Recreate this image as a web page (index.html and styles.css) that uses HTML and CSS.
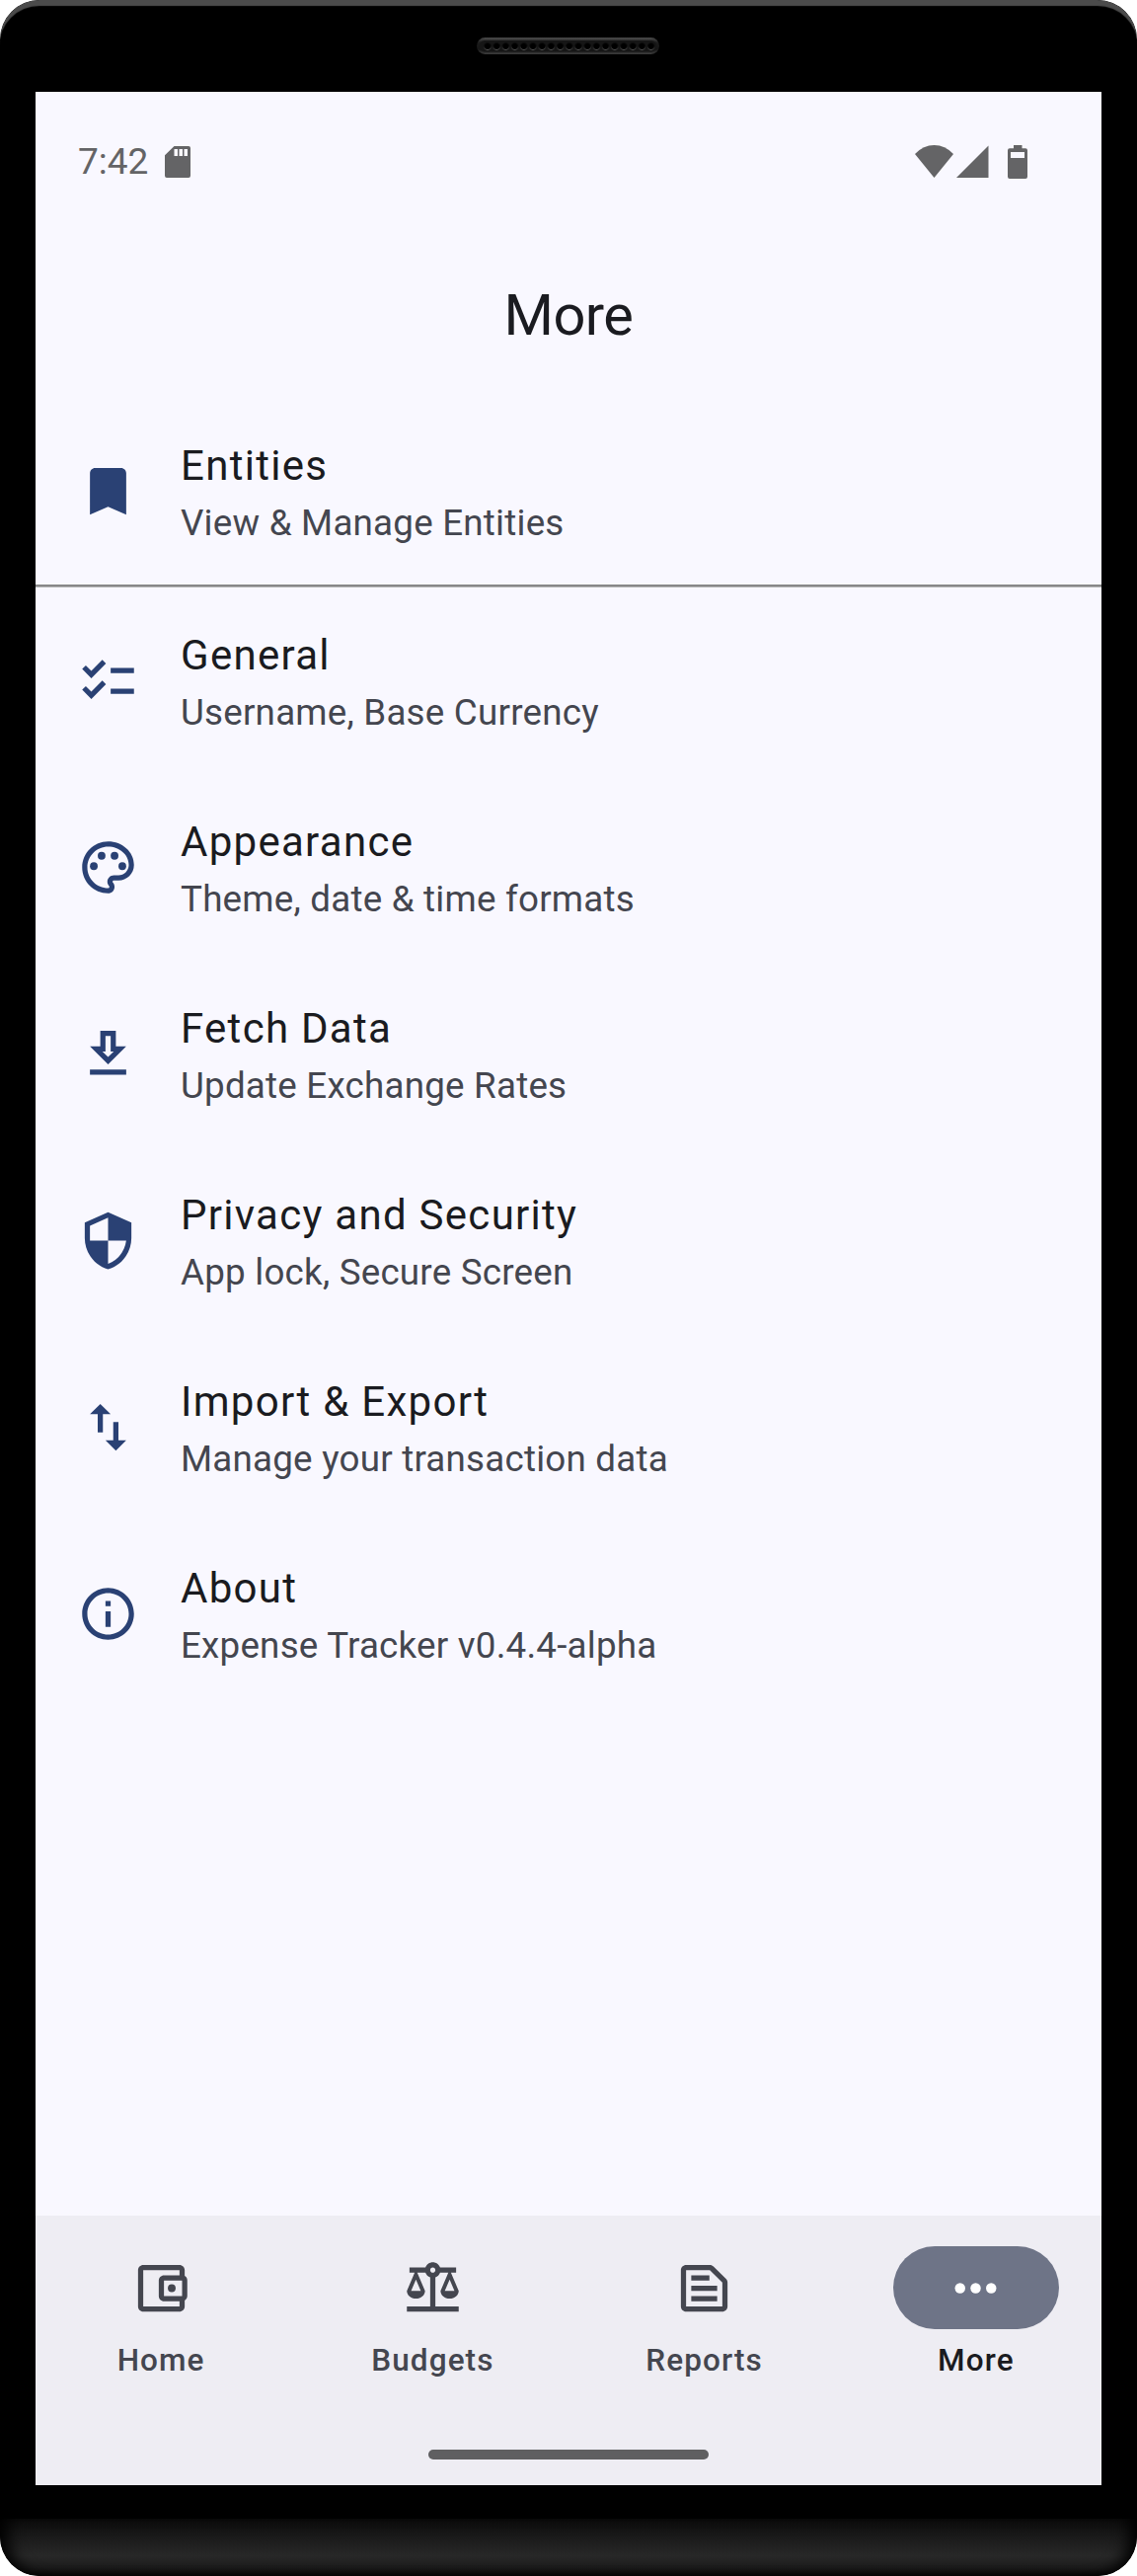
FILE: index.html
```html
<!DOCTYPE html>
<html lang="en">
<head>
<meta charset="utf-8">
<title>More</title>
<link rel="stylesheet" href="styles.css">
</head>
<body>
<div class="phone">
  <div class="bezel-top">
    <svg class="speaker" width="185" height="17" viewBox="0 0 185 17">
      <defs>
        <linearGradient id="rim" x1="0" y1="0" x2="0" y2="1">
          <stop offset="0" stop-color="#4c4c4c"/><stop offset=".3" stop-color="#1c1c1c"/><stop offset=".7" stop-color="#161616"/><stop offset="1" stop-color="#3c3c3c"/>
        </linearGradient>
        <linearGradient id="hole" x1="0" y1="0" x2="0" y2="1">
          <stop offset=".5" stop-color="#0c0c0c"/><stop offset="1" stop-color="#5a5a5a"/>
        </linearGradient>
        <pattern id="holes" x="6.4" y="0" width="9.2" height="17" patternUnits="userSpaceOnUse">
          <circle cx="4.6" cy="9" r="3.4" fill="#000" stroke="url(#hole)" stroke-width="1"/>
        </pattern>
      </defs>
      <rect width="185" height="17" rx="8.5" fill="url(#rim)"/>
      <rect x="2.5" y="3" width="180" height="11.5" rx="5.7" fill="#161616"/>
      <rect x="6.4" width="174.8" height="17" fill="url(#holes)"/>
    </svg>
  </div>
  <div class="screen">
    <header class="status">
      <span class="time">7:42</span>
      <svg class="sd" width="26" height="32" viewBox="0 0 26 32"><path fill-rule="evenodd" d="M9.500 0H24a2 2 0 0 1 2 2V30a2 2 0 0 1-2 2H2a2 2 0 0 1-2-2V9.300ZM9.500 3V10H13V3ZM14.500 3V10H18V3ZM19.500 3V10H23V3Z"/></svg>
      <span class="spacer"></span>
      <svg class="wifi" width="39" height="33" viewBox="0 0 39 33"><path d="M0 9Q8.500 0 19.500 0T39 9L19.500 33Z"/></svg>
      <svg class="signal" width="33" height="33" viewBox="0 0 33 33"><path d="M0 33L32.500 .5V33Z"/></svg>
      <svg class="battery" width="20" height="34" viewBox="0 0 20 34"><path fill-rule="evenodd" d="M6 0H14.500V3.200H18a2 2 0 0 1 2 2V32a2 2 0 0 1-2 2H2a2 2 0 0 1-2-2V5.200a2 2 0 0 1 2-2H6ZM3 7V13H17V7Z"/></svg>
    </header>
    <h1 class="title">More</h1>
    <main class="list">
      <div class="row">
        <svg class="icon" viewBox="0 0 24 24"><path d="M17 3H7c-1.100 0-1.990.9-1.990 2L5 21l7-3 7 3V5c0-1.100-.9-2-2-2z"/></svg>
        <div class="text"><div class="head">Entities</div><div class="sub">View &amp; Manage Entities</div></div>
      </div>
      <hr class="divider">
      <div class="row">
        <svg class="icon" viewBox="0 0 24 24"><path d="M22 7h-9v2h9V7zm0 8h-9v2h9v-2zM5.540 11 2 7.460l1.410-1.410 2.120 2.120 4.240-4.240 1.410 1.410L5.540 11zm0 8L2 15.460l1.410-1.410 2.120 2.120 4.240-4.240 1.410 1.410L5.540 19z"/></svg>
        <div class="text"><div class="head">General</div><div class="sub">Username, Base Currency</div></div>
      </div>
      <div class="row">
        <svg class="icon" viewBox="0 0 24 24"><path d="M12 22C6.490 22 2 17.510 2 12S6.490 2 12 2s10 4.040 10 9c0 3.310-2.690 6-6 6h-1.770c-.28 0-.5.22-.5.5 0 .12.05.23.13.33.41.47.64 1.060.64 1.670 0 1.380-1.120 2.500-2.500 2.500zm0-18c-4.410 0-8 3.590-8 8s3.590 8 8 8c.28 0 .5-.22.5-.5 0-.16-.08-.28-.14-.35-.41-.46-.63-1.050-.63-1.650 0-1.380 1.120-2.500 2.500-2.500H16c2.210 0 4-1.790 4-4 0-3.860-3.590-7-8-7z"/><circle cx="6.5" cy="11.5" r="1.5"/><circle cx="9.5" cy="7.5" r="1.5"/><circle cx="14.5" cy="7.5" r="1.5"/><circle cx="17.5" cy="11.5" r="1.5"/></svg>
        <div class="text"><div class="head">Appearance</div><div class="sub">Theme, date &amp; time formats</div></div>
      </div>
      <div class="row">
        <svg class="icon" viewBox="0 0 24 24"><path d="M19 9h-4V3H9v6H5l7 7 7-7zm-8 2V5h2v6h1.170L12 13.170 9.830 11H11zm-6 7h14v2H5z"/></svg>
        <div class="text"><div class="head">Fetch Data</div><div class="sub">Update Exchange Rates</div></div>
      </div>
      <div class="row">
        <svg class="icon" viewBox="0 0 24 24"><path d="M12 1 3 5v6c0 5.550 3.840 10.740 9 12 5.160-1.260 9-6.450 9-12V5l-9-4zm0 10.990h7c-.53 4.120-3.280 7.790-7 8.940V12H5V6.300l7-3.110v8.800z"/></svg>
        <div class="text"><div class="head">Privacy and Security</div><div class="sub">App lock, Secure Screen</div></div>
      </div>
      <div class="row">
        <svg class="icon" viewBox="0 0 24 24"><path d="M9 3 5 6.990h3V14h2V6.990h3L9 3zm7 14.010V10h-2v7.010h-3L15 21l4-3.990h-3z"/></svg>
        <div class="text"><div class="head">Import &amp; Export</div><div class="sub">Manage your transaction data</div></div>
      </div>
      <div class="row">
        <svg class="icon" viewBox="0 0 24 24"><path d="M11 7h2v2h-2zm0 4h2v6h-2zm1-9C6.480 2 2 6.480 2 12s4.480 10 10 10 10-4.480 10-10S17.520 2 12 2zm0 18c-4.410 0-8-3.590-8-8s3.590-8 8-8 8 3.590 8 8-3.590 8-8 8z"/></svg>
        <div class="text"><div class="head">About</div><div class="sub">Expense Tracker v0.4.4-alpha</div></div>
      </div>
    </main>
    <footer class="bottom">
      <nav class="nav">
        <div class="item">
          <span class="pill"><svg class="icon" viewBox="0 0 24 24"><path d="M21 7.280V5c0-1.100-.9-2-2-2H5c-1.110 0-2 .9-2 2v14c0 1.100.89 2 2 2h14c1.100 0 2-.9 2-2v-2.280c.59-.35 1-.98 1-1.720V9c0-.74-.41-1.380-1-1.720zM20 9v6h-7V9h7zM5 19V5h14v2h-6c-1.100 0-2 .9-2 2v6c0 1.100.9 2 2 2h6v2H5z"/><circle cx="16" cy="12" r="1.5"/></svg></span>
          <span class="label">Home</span>
        </div>
        <div class="item">
          <span class="pill"><svg class="icon" viewBox="0 0 24 24"><path d="M13 7.830c.85-.3 1.530-.98 1.830-1.830H18l-3 7c0 1.660 1.570 3 3.500 3s3.500-1.340 3.500-3l-3-7h2V4h-6.170c-.41-1.170-1.520-2-2.830-2s-2.420.83-2.830 2H3v2h2l-3 7c0 1.660 1.570 3 3.500 3S9 14.660 9 13L6 6h3.170c.3.85.98 1.530 1.830 1.830V19H2v2h20v-2h-9V7.830zM20.370 13h-3.740l1.870-4.360L20.370 13zm-13 0H3.630L5.500 8.640 7.370 13zM12 6c-.55 0-1-.45-1-1s.45-1 1-1 1 .45 1 1-.45 1-1 1z"/></svg></span>
          <span class="label">Budgets</span>
        </div>
        <div class="item">
          <span class="pill"><svg class="icon" viewBox="0 0 24 24"><path d="M14.170 5 19 9.830V19H5V5h9.170m0-2H5c-1.100 0-2 .9-2 2v14c0 1.100.9 2 2 2h14c1.100 0 2-.9 2-2V9.830c0-.53-.21-1.040-.59-1.410l-4.830-4.830c-.37-.38-.88-.59-1.410-.59zM7 15h10v2H7v-2zm0-4h10v2H7v-2zm0-4h7v2H7V7z"/></svg></span>
          <span class="label">Reports</span>
        </div>
        <div class="item active">
          <span class="pill"><svg class="icon" viewBox="0 0 24 24"><circle cx="6" cy="12" r="2"/><circle cx="12" cy="12" r="2"/><circle cx="18" cy="12" r="2"/></svg></span>
          <span class="label">More</span>
        </div>
      </nav>
      <div class="handle"></div>
    </footer>
  </div>
  <div class="bezel-bottom"></div>
</div>
</body>
</html>
```
FILE: styles.css
```css
* { box-sizing: border-box; }
body { margin: 0; background: #fff; font-family: Roboto, sans-serif; }
.phone {
  width: 1152px;
  height: 2609px;
  display: flex;
  flex-direction: column;
  align-items: center;
  background: #000;
  border-radius: 40px;
  overflow: hidden;
}
.bezel-top {
  width: 1152px;
  height: 93px;
  flex: none;
  padding: 38px 1px 0 0;
  display: flex;
  justify-content: center;
  align-items: flex-start;
  border-radius: 40px 40px 0 0;
  box-shadow: inset 0 7px 1px -1px #4b4b4b;
}
.speaker { display: block; }
.screen {
  width: 1080px;
  height: 2424px;
  flex: none;
  display: flex;
  flex-direction: column;
  background: #f9f8ff;
  color: #1a1b20;
}
.status {
  height: 142px;
  flex: none;
  display: flex;
  align-items: flex-start;
  padding: 54px 75px 0 43px;
  fill: #646466;
  color: #646466;
}
.time { font-size: 37px; line-height: 43px; margin-top: -5px; width: 88px; }
.sd { margin-top: 1px; }
.spacer { flex: 1; }
.signal { margin: 0 19px 0 3px; }
.title {
  height: 168px;
  flex: none;
  margin: 0;
  font-size: 57.75px;
  line-height: 168px;
  font-weight: 400;
  letter-spacing: -0.5px;
  text-align: center;
}
.list { flex: 1; }
.row {
  height: 189px;
  display: flex;
  align-items: center;
  gap: 42px;
  padding: 0 42px;
}
.icon { width: 63px; height: 63px; display: block; flex: none; fill: currentColor; }
.row .icon { color: #2a4174; }
.text { padding-top: 2px; }
.head { font-size: 42px; line-height: 63px; letter-spacing: 1.28px; }
.sub { margin-top: 1px; font-size: 36.75px; line-height: 52.5px; letter-spacing: 0.22px; color: #44464f; }
.divider { height: 3px; margin: 0; border: 0; border-bottom: 1px solid #b4b4b4; background: #888888; }
.bottom {
  height: 273px;
  flex: none;
  background: #eeedf3;
}
.nav { display: flex; gap: 21px; height: 237px; padding-top: 31px; }
.item {
  flex: 1;
  display: flex;
  flex-direction: column;
  align-items: center;
  gap: 11px;
  color: #44464f;
}
.pill {
  width: 168px;
  height: 84px;
  display: flex;
  align-items: center;
  justify-content: center;
  border-radius: 42px;
}
.label { font-size: 31.5px; line-height: 42px; font-weight: 500; letter-spacing: 1.1px; }
.active .pill { background: #6e7487; color: #fff; }
.active .label { color: #1a1b20; }
.handle { width: 284px; height: 10px; margin: 0 auto; border-radius: 5px; background: #5f5f61; }
.bezel-bottom {
  width: 1152px;
  height: 58px;
  flex: none;
  margin-top: 34px;
  border-radius: 0 0 40px 40px;
  background: linear-gradient(#0c0c0c, #282828 65%, #1c1c1c 85%, #050505);
  box-shadow: inset 16px 0 16px -8px #000, inset -16px 0 16px -8px #000;
}
```
